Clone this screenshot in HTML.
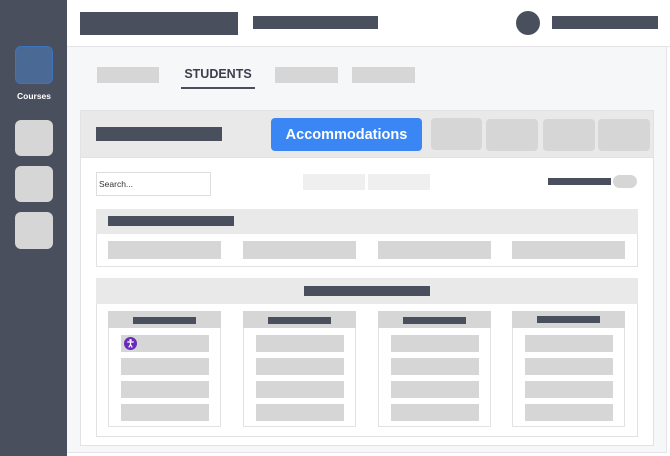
<!DOCTYPE html>
<html><head><style>
*{margin:0;padding:0;box-sizing:border-box}
body{width:670px;height:456px;background:#f6f7f9;position:relative;overflow:hidden;font-family:"Liberation Sans",sans-serif}
div{position:absolute}
.d{background:#4a4f5e}
.g{background:#d6d6d6}
.w{background:#fff}
</style></head><body>
<div style="left:0;top:0;width:67px;height:456px;background:#4a4f5e"></div>
<div style="left:15px;top:46px;width:38px;height:38px;border-radius:6px;background:#4a6a95;border:1px solid #3d74c0"></div>
<div style="left:10px;top:91px;width:48px;text-align:center;color:#fff;font-size:8.5px;font-weight:bold">Courses</div>
<div class="g" style="left:15px;top:120px;width:38px;height:36px;border-radius:6px"></div>
<div class="g" style="left:15px;top:166px;width:38px;height:36px;border-radius:6px"></div>
<div class="g" style="left:15px;top:212px;width:38px;height:37px;border-radius:6px"></div>

<div class="w" style="left:67px;top:0;width:603px;height:47px;border-bottom:1px solid #e4e4e8"></div>
<div style="left:666px;top:47px;width:4px;height:409px;background:#fff;border-left:1px solid #e4e4e8"></div>
<div style="left:67px;top:452px;width:600px;height:4px;background:#fff;border-top:1px solid #e4e4e8"></div>
<div class="d" style="left:80px;top:12px;width:158px;height:23px"></div>
<div class="d" style="left:253px;top:16px;width:125px;height:13px"></div>
<div class="d" style="left:516px;top:11px;width:24px;height:24px;border-radius:50%"></div>
<div class="d" style="left:552px;top:16px;width:106px;height:13px"></div>

<div class="g" style="left:97px;top:67px;width:62px;height:16px"></div>
<div style="left:181px;top:67px;width:74px;text-align:center;color:#3a3f4d;font-size:12.5px;font-weight:bold">STUDENTS</div>
<div class="d" style="left:181px;top:87px;width:74px;height:2px"></div>
<div class="g" style="left:275px;top:67px;width:63px;height:16px"></div>
<div class="g" style="left:352px;top:67px;width:63px;height:16px"></div>

<div class="w" style="left:80px;top:110px;width:574px;height:336px;border:1px solid #e2e2e2"></div>
<div style="left:80px;top:110px;width:574px;height:48px;background:#e9e9e9;border:1px solid #e2e2e2"></div>
<div class="d" style="left:96px;top:127px;width:126px;height:14px"></div>
<div style="left:271px;top:118px;width:151px;height:33px;background:#3b86f5;border-radius:4px;color:#fff;font-size:14.5px;font-weight:bold;text-align:center;line-height:35px">Accommodations</div>
<div class="g" style="left:431px;top:118px;width:51px;height:32px;border-radius:4px"></div>
<div class="g" style="left:486px;top:119px;width:52px;height:32px;border-radius:4px"></div>
<div class="g" style="left:543px;top:119px;width:52px;height:32px;border-radius:4px"></div>
<div class="g" style="left:598px;top:119px;width:52px;height:32px;border-radius:4px"></div>

<div class="w" style="left:96px;top:172px;width:115px;height:24px;border:1px solid #ddd;font-size:8.5px;color:#333;padding:6px 2px">Search...</div>
<div style="left:303px;top:174px;width:62px;height:16px;background:#efefef"></div>
<div style="left:368px;top:174px;width:62px;height:16px;background:#efefef"></div>
<div class="d" style="left:548px;top:178px;width:63px;height:7px"></div>
<div class="g" style="left:613px;top:175px;width:24px;height:13px;border-radius:7px"></div>

<div class="w" style="left:96px;top:209px;width:542px;height:58px;border:1px solid #e2e2e2"></div>
<div style="left:96px;top:209px;width:542px;height:25px;background:#e9e9e9"></div>
<div class="d" style="left:108px;top:216px;width:126px;height:10px"></div>
<div class="g" style="left:108px;top:241px;width:113px;height:18px"></div>
<div class="g" style="left:243px;top:241px;width:113px;height:18px"></div>
<div class="g" style="left:378px;top:241px;width:113px;height:18px"></div>
<div class="g" style="left:512px;top:241px;width:113px;height:18px"></div>

<div class="w" style="left:96px;top:278px;width:542px;height:159px;border:1px solid #e2e2e2"></div>
<div style="left:96px;top:278px;width:542px;height:26px;background:#e9e9e9"></div>
<div class="d" style="left:304px;top:286px;width:126px;height:10px"></div>

<div class="w" style="left:108px;top:311px;width:113px;height:116px;border:1px solid #e2e2e2"></div>
<div class="g" style="left:108px;top:311px;width:113px;height:17px"></div>
<div class="d" style="left:133px;top:317px;width:63px;height:7px"></div>
<div class="g" style="left:121px;top:335px;width:88px;height:17px"></div>
<div class="g" style="left:121px;top:358px;width:88px;height:17px"></div>
<div class="g" style="left:121px;top:381px;width:88px;height:17px"></div>
<div class="g" style="left:121px;top:404px;width:88px;height:17px"></div>
<div style="left:124px;top:337px;width:13px;height:13px;border-radius:50%;background:#6a2bb8"><svg width="13" height="13" viewBox="0 0 12 12"><circle cx="6" cy="3" r="1.1" fill="#fff"/><path d="M3 4.6H9M6 4.6V7M6 7L4.4 9.6M6 7L7.6 9.6" stroke="#fff" stroke-width="1.1" fill="none"/></svg></div>

<div class="w" style="left:243px;top:311px;width:113px;height:116px;border:1px solid #e2e2e2"></div>
<div class="g" style="left:243px;top:311px;width:113px;height:17px"></div>
<div class="d" style="left:268px;top:317px;width:63px;height:7px"></div>
<div class="g" style="left:256px;top:335px;width:88px;height:17px"></div>
<div class="g" style="left:256px;top:358px;width:88px;height:17px"></div>
<div class="g" style="left:256px;top:381px;width:88px;height:17px"></div>
<div class="g" style="left:256px;top:404px;width:88px;height:17px"></div>

<div class="w" style="left:378px;top:311px;width:113px;height:116px;border:1px solid #e2e2e2"></div>
<div class="g" style="left:378px;top:311px;width:113px;height:17px"></div>
<div class="d" style="left:403px;top:317px;width:63px;height:7px"></div>
<div class="g" style="left:391px;top:335px;width:88px;height:17px"></div>
<div class="g" style="left:391px;top:358px;width:88px;height:17px"></div>
<div class="g" style="left:391px;top:381px;width:88px;height:17px"></div>
<div class="g" style="left:391px;top:404px;width:88px;height:17px"></div>

<div class="w" style="left:512px;top:311px;width:113px;height:116px;border:1px solid #e2e2e2"></div>
<div class="g" style="left:512px;top:311px;width:113px;height:17px"></div>
<div class="d" style="left:537px;top:316px;width:63px;height:7px"></div>
<div class="g" style="left:525px;top:335px;width:88px;height:17px"></div>
<div class="g" style="left:525px;top:358px;width:88px;height:17px"></div>
<div class="g" style="left:525px;top:381px;width:88px;height:17px"></div>
<div class="g" style="left:525px;top:404px;width:88px;height:17px"></div>
</body></html>
